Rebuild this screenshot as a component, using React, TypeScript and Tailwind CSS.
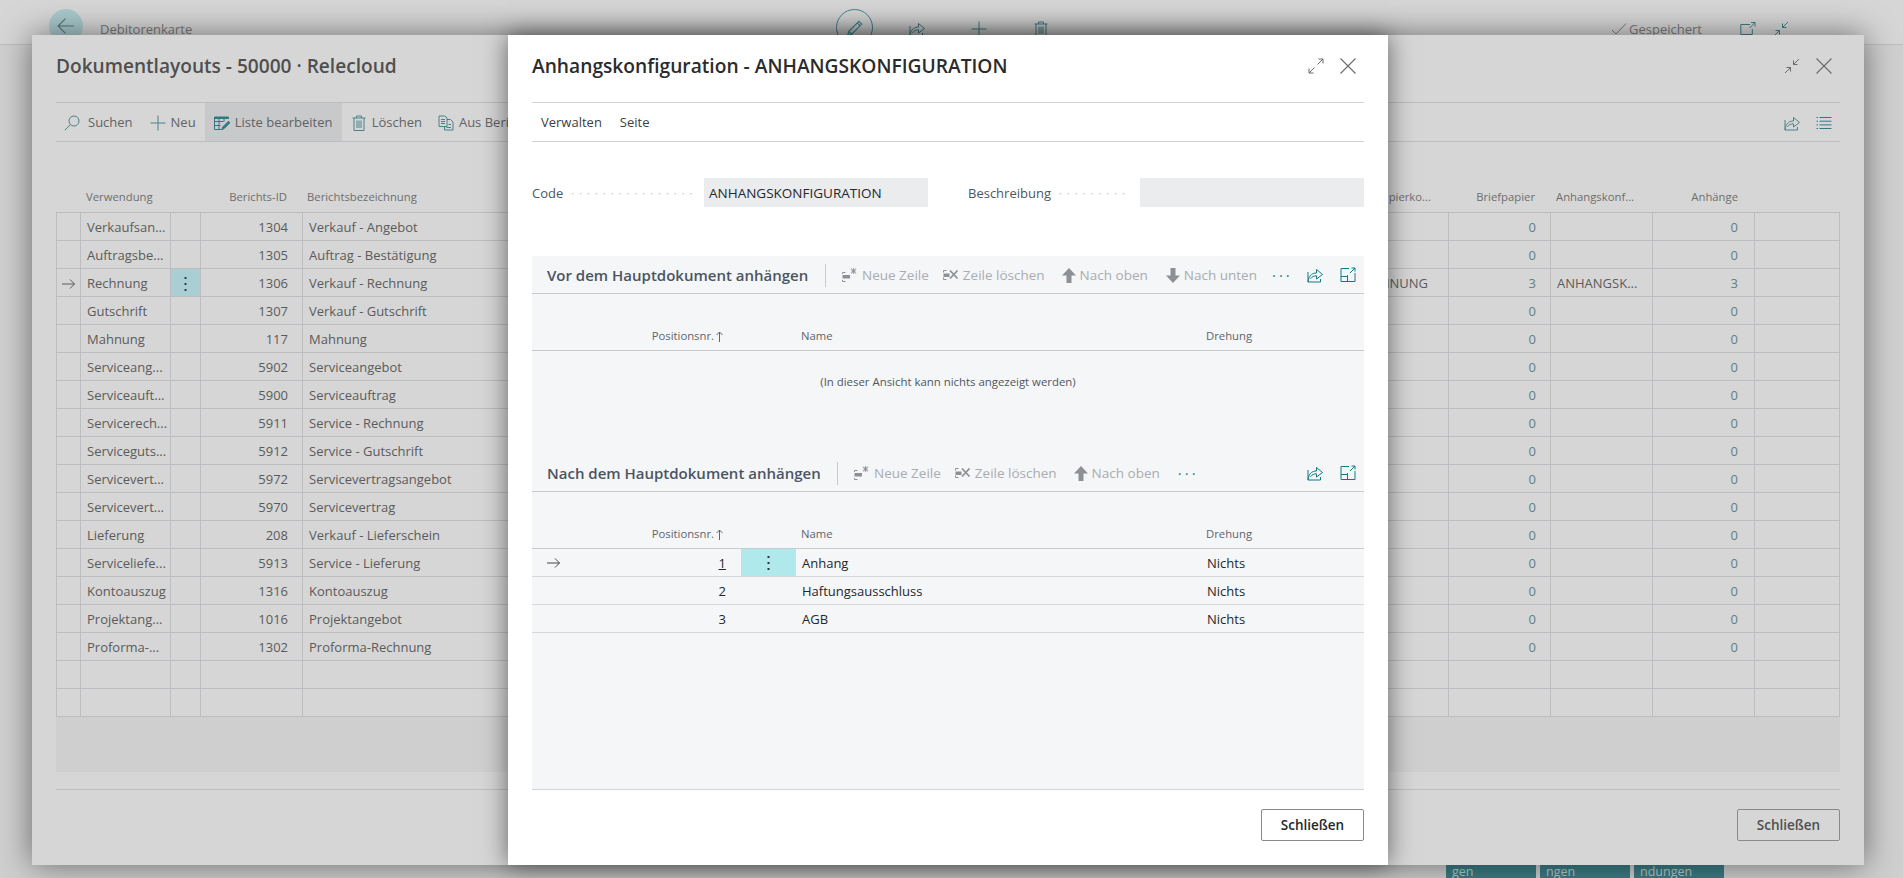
import type { ReactNode } from "react";

const FONT = "font-['Open_Sans','Noto_Sans',sans-serif]";

type IconProps = { className?: string };

function Svg({ className, size = 16, children }: IconProps & { size?: number; children: ReactNode }) {
    return (
        <svg
            width={size}
            height={size}
            viewBox="0 0 16 16"
            fill="none"
            stroke="currentColor"
            strokeWidth="1"
            className={`shrink-0 ${className ?? ""}`}
        >
            {children}
        </svg>
    );
}

const BackArrow = ({ className }: IconProps) => (
    <Svg className={className} size={18}>
        <path d="M1 8h14M7.500 1.500 1 8l6.500 6.500" />
    </Svg>
);
const Pencil = ({ className }: IconProps) => (
    <Svg className={className} size={18}>
        <path d="M1.500 14.500 2.500 11 11.500 2l2.500 2.500-9 9z M10 3.500 12.500 6 M2.500 11 5 13.500" />
    </Svg>
);
const Share = ({ className }: IconProps) => (
    <Svg className={className}>
        <path d="M1 5v10h12.500v-3M1 15c.3-3.500 1.500-6 3.500-7.500 1.300-1 3-1.500 5-1.500V2.500L15.500 7.500 9.500 12V8.800c-2.500 0-4.500.7-6 3" />
    </Svg>
);
const Plus = ({ className }: IconProps) => (
    <Svg className={className}>
        <path d="M8 .5v15M.5 8h15" />
    </Svg>
);
const Trash = ({ className }: IconProps) => (
    <Svg className={className}>
        <path d="M1.500 3h13M5.500 3V1h5v2M3 3v12.500h10V3M6 5.500v7.500M8 5.500v7.500M10 5.500v7.500" />
    </Svg>
);
const Search = ({ className }: IconProps) => (
    <Svg className={className}>
        <circle cx="10" cy="6" r="5" />
        <path d="M6.300 9.700.8 15.200" />
    </Svg>
);
const EditList = ({ className }: IconProps) => (
    <Svg className={className}>
        <path d="M.5 2h14v1.500H.5z" fill="currentColor" />
        <path d="M.5 2v12.500h8M.5 6.500h9M.5 10.500h6M5 3.500v11M10 3.500v3" />
        <path d="M8 14.500l.7-2.500 5.800-5.800 1.500 1.500-5.800 5.800z" fill="currentColor" />
    </Svg>
);
const Report = ({ className }: IconProps) => (
    <Svg className={className}>
        <path d="M1 1h6l2 2v8.500H1zM3 4.500h4M3 6.500h4M3 8.500h4" />
        <path d="M9 4.500h3.500l2.500 2.500v8H6.500v-3.500M10.500 9.500H13M8.500 12.500H13" />
    </Svg>
);
const Check = ({ className }: IconProps) => (
    <Svg className={className}>
        <path d="M1 9l4 4L15 2.500" />
    </Svg>
);
const OpenNew = ({ className }: IconProps) => (
    <Svg className={className}>
        <path d="M10 3.500H.8v10h11.500V8M9.500 7l5.500-5.500M11 1.500h4v4" />
    </Svg>
);
const Collapse = ({ className }: IconProps) => (
    <Svg className={className}>
        <path d="M15 1 9.500 6.500M9.500 2.500v4h4M1 15l5.500-5.500M2.500 9.500h4v4" />
    </Svg>
);
const Expand = ({ className }: IconProps) => (
    <Svg className={className}>
        <path d="M9.500 6.500 15 1M10.500 1H15v4.500M6.500 9.500 1 15M1 10.500V15h4.500" />
    </Svg>
);
const Close = ({ className }: IconProps) => (
    <Svg className={className}>
        <path d="M.5.5l15 15M15.500.5l-15 15" strokeWidth="1.100" />
    </Svg>
);
const ListLines = ({ className }: IconProps) => (
    <Svg className={className}>
        <path d="M.5 2.500h1.500M3.500 2.500h12M.5 6.200h1.500M3.500 6.200h12M.5 9.900h1.500M3.500 9.900h12M.5 13.500h1.500M3.500 13.500h12" />
    </Svg>
);
const BigView = ({ className }: IconProps) => (
    <Svg className={className}>
        <path d="M9 1.500H1v13h14V6M1 9.500h6.500v5M7.500 9.500V8M10 6l5-5M11.500 1H15v3.500" />
    </Svg>
);
const NewLine = ({ className }: IconProps) => (
    <Svg className={className}>
        <path d="M.5 5.500h3M.5 5.500v1.500M.5 13v1.500h3" />
        <path d="M.5 8h7.500v3.500H.5z" fill="currentColor" stroke="none" />
        <path d="M11.500 1v6M8.800 2.500l5.400 3M14.200 2.500l-5.400 3M9.500 1.500l4 5M13.500 1.500l-4 5" strokeWidth=".8" />
    </Svg>
);
const DeleteLine = ({ className }: IconProps) => (
    <Svg className={className}>
        <path d="M.5 3.500h3M.5 3.500v2M.5 10.500v2h3" />
        <path d="M.5 6.500h6v3.500h-6z" fill="currentColor" stroke="none" />
        <path d="M7 3.500l7.500 8M14.500 3.500l-7.500 8" strokeWidth="1.800" />
    </Svg>
);
const ArrowUpBold = ({ className }: IconProps) => (
    <svg width="14" height="15" viewBox="0 0 14 15" className={`shrink-0 ${className ?? ""}`} fill="currentColor">
        <path d="M7 0l7 7.500h-4.500V15h-5V7.500H0z" />
    </svg>
);
const ArrowDownBold = ({ className }: IconProps) => (
    <svg width="14" height="15" viewBox="0 0 14 15" className={`shrink-0 ${className ?? ""}`} fill="currentColor">
        <path d="M7 15 0 7.500h4.500V0h5v7.500H14z" />
    </svg>
);
const RowArrow = ({ className }: IconProps) => (
    <svg width="13" height="10" viewBox="0 0 13 10" fill="none" stroke="currentColor" className={`shrink-0 ${className ?? ""}`}>
        <path d="M0 5h12.500M8 .5 12.500 5 8 9.500" />
    </svg>
);
const Kebab = ({ className }: IconProps) => (
    <svg width="3" height="14" viewBox="0 0 3 14" fill="currentColor" className={`shrink-0 ${className ?? ""}`}>
        <rect x=".5" y="0" width="2" height="2" />
        <rect x=".5" y="6" width="2" height="2" />
        <rect x=".5" y="12" width="2" height="2" />
    </svg>
);

const rows: [string, string, string][] = [
    ["Verkaufsan...", "1304", "Verkauf - Angebot"],
    ["Auftragsbe...", "1305", "Auftrag - Bestätigung"],
    ["Rechnung", "1306", "Verkauf - Rechnung"],
    ["Gutschrift", "1307", "Verkauf - Gutschrift"],
    ["Mahnung", "117", "Mahnung"],
    ["Serviceang...", "5902", "Serviceangebot"],
    ["Serviceauft...", "5900", "Serviceauftrag"],
    ["Servicerech...", "5911", "Service - Rechnung"],
    ["Serviceguts...", "5912", "Service - Gutschrift"],
    ["Servicevert...", "5972", "Servicevertragsangebot"],
    ["Servicevert...", "5970", "Servicevertrag"],
    ["Lieferung", "208", "Verkauf - Lieferschein"],
    ["Serviceliefe...", "5913", "Service - Lieferung"],
    ["Kontoauszug", "1316", "Kontoauszug"],
    ["Projektang...", "1016", "Projektangebot"],
    ["Proforma-...", "1302", "Proforma-Rechnung"],
    ["", "", ""],
    ["", "", ""],
];

const GRID = "grid grid-cols-[24px_90px_30px_102px_1035px_111px_102px_102px_102px_85px]";

function Cell({ children, className }: { children?: ReactNode; className?: string }) {
    return (
        <div className={`flex h-[28px] items-center border-r border-b border-[#bcbdc1] pt-[2px] ${className ?? ""}`}>{children}</div>
    );
}

function LayoutTable() {
    return (
        <div className="w-[1784px] text-[13px] text-[#5b5b5b]">
            <div className={`${GRID} h-[27px] items-center pb-[3px] text-[11.300px] text-[#6e6e6e]`}>
                <span />
                <span className="pl-[6px]">Verwendung</span>
                <span />
                <span className="pr-[15px] text-right">Berichts-ID</span>
                <span className="pl-[5px]">Berichtsbezeichnung</span>
                <span className="pr-[17px] text-right">Briefpapierko...</span>
                <span className="pr-[15px] text-right">Briefpapier</span>
                <span className="pl-[6px]">Anhangskonf...</span>
                <span className="pr-[16px] text-right">Anhänge</span>
                <span />
            </div>
            <div className="border-t border-l border-[#bcbdc1]">
                {rows.map(([usage, id, name], i) => {
                    const current = usage === "Rechnung";
                    const filled = usage !== "";
                    return (
                        <div key={i} className={GRID}>
                            <Cell className="justify-center pt-0 text-[#5b5b5b]">{current && <RowArrow />}</Cell>
                            <Cell className="pl-[6px]">{usage}</Cell>
                            <Cell className={current ? "justify-center bg-[#a9cfd4] pt-0" : ""}>
                                {current && <Kebab className="text-[#3d3d3d]" />}
                            </Cell>
                            <Cell className="justify-end pr-[14px]">{id}</Cell>
                            <Cell className="pl-[6px]">{name}</Cell>
                            <Cell className="justify-end pr-[20px]">{current ? "RECHNUNG" : ""}</Cell>
                            <Cell className="justify-end pr-[14px] text-[#5e8085]">{filled ? (current ? "3" : "0") : ""}</Cell>
                            <Cell className="pl-[6px]">{current ? "ANHANGSK..." : ""}</Cell>
                            <Cell className="justify-end pr-[16px] text-[#5e8085]">{filled ? (current ? "3" : "0") : ""}</Cell>
                            <Cell />
                        </div>
                    );
                })}
            </div>
        </div>
    );
}

function CommandBar() {
    const iconTeal = "text-[#4a8288]";
    return (
        <div className="flex h-[40px] items-stretch border-y border-[#bcbdc1] text-[13px] text-[#626262]">
            <div className="flex items-center gap-[8px] pl-[8px] pr-[17px] pt-[1px]">
                <Search className={iconTeal} />
                Suchen
            </div>
            <div className="flex items-center gap-[5px] pr-[9px] pt-[1px]">
                <Plus className={iconTeal} />
                Neu
            </div>
            <div className="flex w-[137px] items-center gap-[5px] bg-[#c8c9cb] pl-[9px] pt-[1px]">
                <EditList className="text-[#2f7b84]" />
                Liste bearbeiten
            </div>
            <div className="flex items-center gap-[5px] pl-[9px] pr-[16px] pt-[1px]">
                <Trash className={iconTeal} />
                Löschen
            </div>
            <div className="flex items-center gap-[5px] pt-[1px]">
                <Report className={iconTeal} />
                Aus Berichtsauswahl
            </div>
            <div className="ml-auto flex items-center gap-[16px] pr-[8px] pt-[1px]">
                <Share className={iconTeal} />
                <ListLines className="text-[#2f7b84]" />
            </div>
        </div>
    );
}

function Tool({ icon, label, className }: { icon: ReactNode; label: string; className?: string }) {
    return (
        <span className={`flex items-center gap-[4px] ${className ?? ""}`}>
            {icon}
            {label}
        </span>
    );
}

function PartHeader({ title, titleWidth, showDown }: { title: string; titleWidth: string; showDown: boolean }) {
    return (
        <div className="flex h-[38px] items-center border-b border-[#c8cacd] pt-[1px] text-[13.500px] text-[#a9acb1]">
            <h2 className={`${titleWidth} pl-[15px] text-[15px] font-semibold text-[#4b5560]`}>{title}</h2>
            <span className="mr-[16px] h-[23px] w-px bg-[#c8cacd]" />
            <Tool icon={<NewLine className="text-[#8d9095]" />} label="Neue Zeile" className="mr-[14px]" />
            <Tool icon={<DeleteLine className="text-[#8d9095]" />} label="Zeile löschen" className="mr-[17px]" />
            <Tool icon={<ArrowUpBold className="text-[#8d9095]" />} label="Nach oben" className="mr-[18px]" />
            {showDown && <Tool icon={<ArrowDownBold className="text-[#8d9095]" />} label="Nach unten" className="mr-[15px]" />}
            <span className="text-[15px] tracking-[3px] text-[#1f7f87]">···</span>
            <div className="ml-auto flex items-center gap-[17px] pr-[8px] text-[#0f7b85]">
                <Share />
                <BigView />
            </div>
        </div>
    );
}

const attachments = [
    { no: "1", name: "Anhang", current: true },
    { no: "2", name: "Haftungsausschluss", current: false },
    { no: "3", name: "AGB", current: false },
];

const LIST_GRID = "grid grid-cols-[209px_55px_6px_405px_auto]";

function ColumnHeads() {
    return (
        <div className={`${LIST_GRID} h-[32px] items-center border-b border-[#c8cacd] pt-[3px] text-[11.300px] text-[#60656b]`}>
            <span className="flex items-center justify-end gap-[2px] pr-[18px]">
                Positionsnr.
                <svg width="7" height="11" viewBox="0 0 7 11" fill="none" stroke="currentColor">
                    <path d="M3.500 11V1M.5 4l3-3 3 3" />
                </svg>
            </span>
            <span />
            <span />
            <span className="-ml-[1px]">Name</span>
            <span className="-ml-[1px]">Drehung</span>
        </div>
    );
}

function AttachmentRow({ no, name, current }: { no: string; name: string; current: boolean }) {
    return (
        <div className={`${LIST_GRID} h-[28px] items-stretch border-b border-[#d5d7da] text-[13px] text-[#24282c]`}>
            <span className="flex items-center justify-between pl-[15px] pr-[15px] pt-[3px]">
                {current ? <RowArrow className="-mt-[3px] text-[#444]" /> : <span />}
                <span className={current ? "underline" : ""}>{no}</span>
            </span>
            <span className={`flex items-center justify-center ${current ? "bg-[#b0e9ec]" : ""}`}>
                {current && <Kebab className="text-[#333]" />}
            </span>
            <span />
            <span className="flex items-center pt-[3px]">{name}</span>
            <span className="flex items-center pt-[3px]">Nichts</span>
        </div>
    );
}

function Field({ label, value, dots }: { label: string; value?: string; dots: string }) {
    return (
        <div className="flex items-center">
            <span className="flex w-[172px] items-center pt-[2px] text-[13px] text-[#4f565d]">
                {label}
                <span className="ml-[8px] mr-[9px] flex-1 overflow-hidden whitespace-nowrap text-[11px] tracking-[5px] text-[#bdbfc2]">
                    {dots}
                </span>
            </span>
            <div className="flex h-[29px] w-[224px] items-center bg-[#ebecee] pl-[5px] pt-[1px] text-[13.500px] text-[#24282c]">{value}</div>
        </div>
    );
}

export default function App() {
    return (
        <div className={`${FONT} relative flex h-[878px] w-[1903px] flex-col overflow-hidden bg-[#cfcfcf]`}>
            {/* Card page behind both dialogs */}
            <header className="flex h-[45px] items-start border-b border-[#bdbdbd] bg-[#d6d6d6] pl-[49px] pt-[9px] text-[13px] text-[#7a7a7a]">
                <div className="flex w-[787px] items-start">
                    <span className="flex h-[34px] w-[34px] items-center justify-center rounded-full bg-[#a9c9cc] text-[#5a7578]">
                        <BackArrow />
                    </span>
                    <span className="ml-[17px] mt-[10px] leading-[20px]">Debitorenkarte</span>
                </div>
                <span className="flex h-[37px] w-[37px] items-center justify-center rounded-full border border-[#3f8a90] text-[#3f8a90]">
                    <Pencil />
                </span>
                <div className="ml-[36px] mt-[12px] flex gap-[46px] text-[#3f7f85]">
                    <Share />
                    <Plus />
                    <Trash />
                </div>
                <span className="ml-[562px] mt-[10px] flex items-center gap-[2px] leading-[20px]">
                    <Check />
                    Gespeichert
                </span>
                <div className="ml-[38px] mt-[12px] flex gap-[17px] text-[#3f7f85]">
                    <OpenNew />
                    <Collapse />
                </div>
            </header>

            <div className="mr-[179px] mt-auto flex justify-end gap-[4px] text-[12.500px] leading-[13px] text-[#b9cdcf]">
                <span className="h-[13px] w-[90px] overflow-hidden bg-[#3b7d84] pl-[6px]">gen</span>
                <span className="h-[13px] w-[90px] overflow-hidden bg-[#3b7d84] pl-[6px]">ngen</span>
                <span className="h-[13px] w-[90px] overflow-hidden bg-[#3b7d84] pl-[6px]">ndungen</span>
            </div>

            {/* Document layouts dialog */}
            <section className="absolute left-[32px] top-[35px] flex h-[830px] w-[1832px] flex-col bg-[#d6d6d6] px-[24px] shadow-[0_0_30px_rgba(0,0,0,0.5)]">
                <div className="flex h-[67px] items-center justify-between pb-[5px]">
                    <h1 className="text-[19.100px] font-semibold text-[#4f4f4f]">Dokumentlayouts - 50000 · Relecloud</h1>
                    <div className="flex items-center gap-[16px] pr-[8px] text-[#6a6a6a]">
                        <Collapse />
                        <Close />
                    </div>
                </div>
                <CommandBar />
                <div className="mt-[43px]">
                    <LayoutTable />
                </div>
                <div className="h-[55px] w-[1784px] bg-[#cfcfcf]" />
                <div className="mt-[17px] border-t border-[#bcbdc1] pt-[19px]">
                    <div className="flex justify-end">
                        <button className="h-[32px] w-[103px] rounded-[2px] border border-[#8a8a8a] text-[13.500px] font-semibold text-[#4f4f4f]">
                            Schließen
                        </button>
                    </div>
                </div>
            </section>

            {/* Attachment configuration dialog */}
            <section className="absolute left-[508px] top-[35px] flex h-[830px] w-[880px] flex-col bg-white px-[24px] shadow-[0_0_24px_rgba(0,0,0,0.55)]">
                <div className="flex h-[67px] items-center justify-between pb-[5px]">
                    <h1 className="text-[19.200px] font-semibold text-[#2b2b2b]">Anhangskonfiguration - ANHANGSKONFIGURATION</h1>
                    <div className="flex items-center gap-[16px] pr-[8px] text-[#6a6a6a]">
                        <Expand />
                        <Close />
                    </div>
                </div>
                <nav className="flex h-[40px] items-center gap-[18px] border-y border-[#d2d3d5] pl-[9px] pt-[1px] text-[13px] text-[#3e3e3e]">
                    <span>Verwalten</span>
                    <span>Seite</span>
                </nav>
                <div className="mt-[36px] flex gap-[40px]">
                    <Field label="Code" value="ANHANGSKONFIGURATION" dots="················" />
                    <Field label="Beschreibung" dots="·········" />
                </div>

                <div className="mt-[49px] flex h-[533px] flex-col bg-[#f5f6f8]">
                    <PartHeader title="Vor dem Hauptdokument anhängen" titleWidth="w-[293px]" showDown />
                    <div className="mt-[25px]">
                        <ColumnHeads />
                    </div>
                    <p className="flex h-[61px] items-center justify-center text-[11.400px] text-[#4f565d]">
                        (In dieser Ansicht kann nichts angezeigt werden)
                    </p>
                    <div className="mt-[42px]">
                        <PartHeader title="Nach dem Hauptdokument anhängen" titleWidth="w-[305px]" showDown={false} />
                    </div>
                    <div className="mt-[25px]">
                        <ColumnHeads />
                        {attachments.map((a) => (
                            <AttachmentRow key={a.no} {...a} />
                        ))}
                    </div>
                </div>
                <div className="border-t border-[#d2d3d5] pt-[19px]">
                    <div className="flex justify-end">
                        <button className="h-[32px] w-[103px] rounded-[2px] border border-[#8a8a8a] text-[13.500px] font-semibold text-[#24282c]">
                            Schließen
                        </button>
                    </div>
                </div>
            </section>
        </div>
    );
}
